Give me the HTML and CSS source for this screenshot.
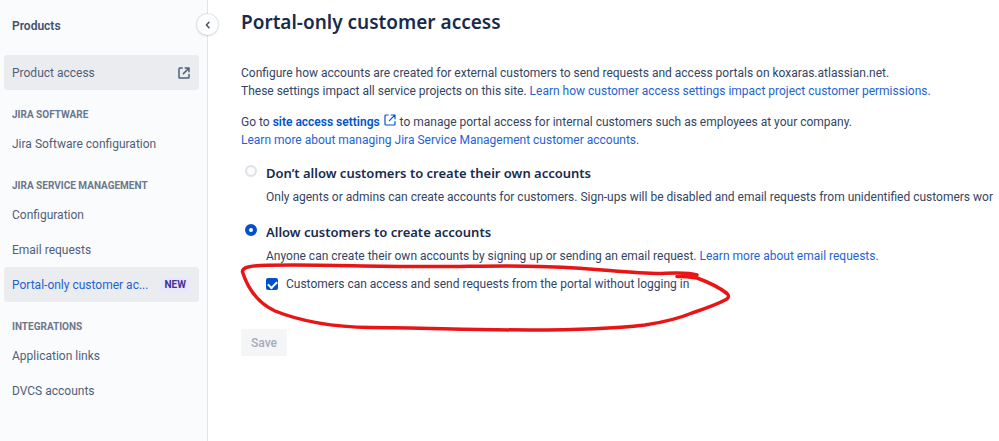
FILE: index.html
```html
<!DOCTYPE html>
<html lang="en">

<head>
  <meta charset="UTF-8" />
  <meta name="viewport" content="width=device-width, initial-scale=1.0" />
  <title>Portal-only customer access</title>
  <link rel="stylesheet" href="styles.css">
</head>

<body>
  <div class="page">
    <aside class="sidebar">
      <h2 class="sidebar-title">Products</h2>
      <button class="collapse-btn" aria-label="Collapse sidebar">
        <svg width="8" height="8" viewBox="0 0 8 8" fill="none" stroke="currentColor" stroke-width="1.5"
          stroke-linecap="round" stroke-linejoin="round">
          <path d="M5 1.2L2.4 4L5 6.8" />
        </svg>
      </button>
      <nav>
        <a href="#" class="nav-item active">
          <span class="nav-text">Product access</span>
          <svg class="nav-icon" width="12" height="12" viewBox="0 0 12 12" fill="none" stroke="currentColor"
            stroke-width="1.5" stroke-linecap="round" stroke-linejoin="round">
            <path d="M4.2 1H1.8Q1 1 1 1.8V10.2Q1 11 1.8 11H10.2Q11 11 11 10.2V7.6M7.2 1H11V4.8M10.8 1.2L5.4 6.6" />
          </svg>
        </a>
        <h3 class="nav-heading">JIRA SOFTWARE</h3>
        <a href="#" class="nav-item"><span class="nav-text">Jira Software configuration</span></a>
        <h3 class="nav-heading">JIRA SERVICE MANAGEMENT</h3>
        <a href="#" class="nav-item"><span class="nav-text">Configuration</span></a>
        <a href="#" class="nav-item"><span class="nav-text">Email requests</span></a>
        <a href="#" class="nav-item active selected">
          <span class="nav-text">Portal-only customer ac...</span>
          <span class="badge">NEW</span>
        </a>
        <h3 class="nav-heading">INTEGRATIONS</h3>
        <a href="#" class="nav-item"><span class="nav-text">Application links</span></a>
        <a href="#" class="nav-item"><span class="nav-text">DVCS accounts</span></a>
      </nav>
    </aside>

    <main class="content">
      <h1>Portal-only customer access</h1>
      <p>
        Configure how accounts are created for external customers to send requests and access portals on koxaras.atlassian.net.<br>
        These settings impact all service projects on this site. <a href="#">Learn how customer access settings impact project customer permissions.</a>
      </p>
      <p>
        Go to <a href="#" class="strong">site access settings
          <svg class="link-icon" width="12" height="12" viewBox="0 0 12 12" fill="none" stroke="currentColor"
            stroke-width="1.2" stroke-linecap="round" stroke-linejoin="round">
            <path d="M4.2 1H1.8Q1 1 1 1.8V10.2Q1 11 1.8 11H10.2Q11 11 11 10.2V7.6M7.2 1H11V4.8M10.8 1.2L5.4 6.6" />
          </svg></a>
        to manage portal access for internal customers such as employees at your company.<br>
        <a href="#">Learn more about managing Jira Service Management customer accounts.</a>
      </p>

      <form class="options">
        <div class="option">
          <input type="radio" name="signup" id="deny">
          <label for="deny">Don’t allow customers to create their own accounts</label>
          <div class="option-text">Only agents or admins can create accounts for customers. Sign-ups will be disabled and email requests from unidentified customers wor</div>
        </div>
        <div class="option">
          <input type="radio" name="signup" id="allow" checked>
          <label for="allow">Allow customers to create accounts</label>
          <div class="option-text">Anyone can create their own accounts by signing up or sending an email request. <a href="#">Learn more about email requests.</a></div>
          <div class="sub-option">
            <input type="checkbox" id="no-login" checked>
            <label for="no-login">Customers can access and send requests from the portal without logging in</label>
            <!-- hand drawn circle -->
            <svg class="marker" width="492" height="74" viewBox="240 261 492 74" fill="none" stroke="#e81416"
              stroke-width="3.5" stroke-linecap="round" stroke-linejoin="round">
              <path d="M677 276.500C684 276 690 277 697 278C708 282 720 288 727 293.500Q730 296 727 299C718 304 707 308 692 313C680 318 665 322 645 325C610 329 570 330 530 330C470 330 420 327.500 370 327.500C335 327 300 321 275 311C256 302 247 286 242.500 272C242 267.500 250 266 260 265.500C310 264 360 266.500 420 266.500C460 267 500 265 540 266.500C590 267.500 625 273 660 273.500C675 273 688 272 697 275" />
            </svg>
          </div>
        </div>
        <button type="submit" class="save-btn" disabled>Save</button>
      </form>
    </main>
  </div>
</body>

</html>
```

FILE: styles.css
```css
* {
  margin: 0;
  padding: 0;
  box-sizing: border-box;
}

body {
  background-color: #fff;
  color: #344563;
  font-family: Roboto, "Open Sans", sans-serif;
  font-size: 12px;
  line-height: 18px;
}

a {
  color: #1f62d2;
  text-decoration: none;
}

.page {
  display: flex;
  min-height: 100vh;
}

/* Sidebar */
.sidebar {
  position: relative;
  flex: 0 0 208px;
  min-width: 0;
  padding: 17px 8px 0 4px;
  background: #fafbfc;
  border-right: 1px solid #e3e5e9;
}

.sidebar-title {
  padding: 0 8px;
  margin-bottom: 20px;
  font-size: 12px;
  font-weight: 600;
  color: #42526e;
}

.collapse-btn {
  position: absolute;
  top: 14px;
  right: -11px;
  width: 21px;
  height: 21px;
  display: flex;
  align-items: center;
  justify-content: center;
  border: none;
  border-radius: 50%;
  background: #fff;
  color: #42526e;
  box-shadow: 0 0 0 1px rgba(9, 30, 66, 0.08), 0 1px 3px rgba(9, 30, 66, 0.12);
}

.nav-item {
  display: flex;
  align-items: center;
  height: 35px;
  padding: 0 9px 0 8px;
  border-radius: 3px;
  color: #505f79;
}

.nav-item.active {
  background: #ebecf0;
}

.nav-item.selected {
  color: #1f62d2;
}

.nav-text {
  flex: 1;
  white-space: nowrap;
}

.nav-heading {
  padding: 18px 8px 4px;
  font-size: 10px;
  line-height: 14px;
  font-weight: 700;
  color: #6b778c;
}

.badge {
  padding: 0 4px;
  border-radius: 3px;
  background: #eae6ff;
  color: #403294;
  font-size: 10px;
  line-height: 14px;
  font-weight: 700;
}

/* Content */
.content {
  flex: 1;
  min-width: 0;
  padding: 8px 0 0 33px;
  overflow: hidden;
}

h1 {
  margin-bottom: 28px;
  font-family: "Noto Sans", sans-serif;
  font-size: 19px;
  line-height: 28px;
  font-weight: 600;
  color: #172b4d;
}

p {
  margin-bottom: 13px;
}

.strong {
  color: #0052cc;
  font-weight: 600;
}

.link-icon {
  margin: 0 1px;
}

.options {
  padding-top: 2px;
}

.option {
  display: grid;
  grid-template-columns: 25px 1fr;
  row-gap: 6px;
  margin-bottom: 17px;
}

.option > label {
  font-family: "Noto Sans", sans-serif;
  font-size: 13px;
  font-weight: 600;
  color: #172b4d;
}

.option-text {
  grid-column: 2;
  white-space: nowrap;
}

input[type="radio"] {
  appearance: none;
  width: 12px;
  height: 12px;
  margin: 1px 0 0 4px;
  border: 2px solid #dfe1e6;
  border-radius: 50%;
  background: #fafbfc;
}

input[type="radio"]:checked {
  border: 4px solid #0052cc;
  background: #fff;
}

.sub-option {
  grid-column: 2;
  position: relative;
  display: flex;
  align-items: center;
  gap: 8px;
  margin-top: 4px;
}

input[type="checkbox"] {
  appearance: none;
  display: flex;
  justify-content: center;
  width: 12px;
  height: 12px;
  border-radius: 2px;
  background: #0052cc;
}

input[type="checkbox"]:checked::after {
  content: "";
  width: 7px;
  height: 4px;
  margin-top: 3px;
  border-left: 2px solid #fff;
  border-bottom: 2px solid #fff;
  transform: rotate(-45deg);
}

.marker {
  position: absolute;
  top: -14px;
  left: -26px;
  pointer-events: none;
}

.save-btn {
  height: 27px;
  margin-top: 19px;
  padding: 0 10px;
  border: none;
  border-radius: 3px;
  background: #f4f5f7;
  color: #a5adba;
  font-family: inherit;
  font-size: 12px;
  font-weight: 500;
}
```
